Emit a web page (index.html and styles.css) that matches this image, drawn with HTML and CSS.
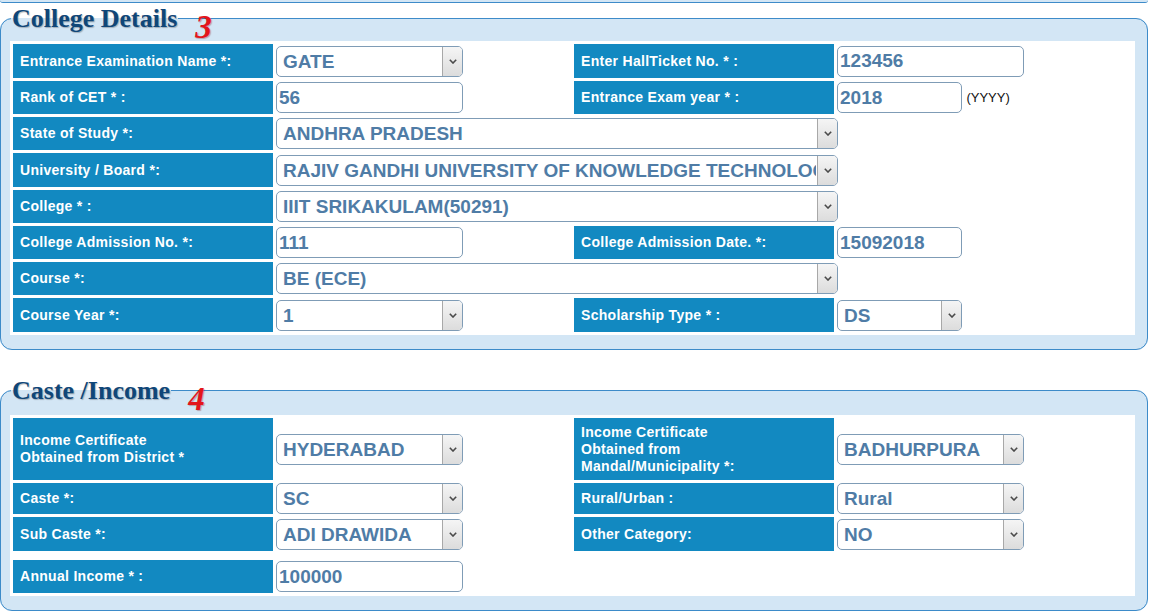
FILE: index.html
```html
<!DOCTYPE html>
<html lang="en">
<head>
    <meta charset="UTF-8">
    <title>Scholarship Application - College Details</title>
    <link rel="stylesheet" href="styles.css">
</head>
<body>
    <div class="prev-box"></div>

    <fieldset class="section">
        <legend>College Details<span class="step">3</span></legend>
        <table class="form-table">
            <colgroup>
                <col class="c-label"><col class="c-field"><col class="c-label"><col class="c-field">
            </colgroup>
            <tr class="r34">
                <td class="lbl">Entrance Examination Name *:</td>
                <td>
                    <span class="sel w-md"><select><option>GATE</option></select><i class="arr"><svg width="8" height="5" viewBox="0 0 8 5"><polyline points="0.8,0.8 4,4 7.2,0.8"/></svg></i></span>
                </td>
                <td class="lbl">Enter HallTicket No. * :</td>
                <td><input class="txt w-md" type="text" value="123456"></td>
            </tr>
            <tr>
                <td class="lbl">Rank of CET * :</td>
                <td><input class="txt w-md" type="text" value="56"></td>
                <td class="lbl">Entrance Exam year * :</td>
                <td><input class="txt w-sm" type="text" value="2018"> <span class="hint">(YYYY)</span></td>
            </tr>
            <tr>
                <td class="lbl">State of Study *:</td>
                <td colspan="3">
                    <span class="sel w-lg"><select><option>ANDHRA PRADESH</option></select><i class="arr"><svg width="8" height="5" viewBox="0 0 8 5"><polyline points="0.8,0.8 4,4 7.2,0.8"/></svg></i></span>
                </td>
            </tr>
            <tr class="r34">
                <td class="lbl">University / Board *:</td>
                <td colspan="3">
                    <span class="sel w-lg"><select><option>RAJIV GANDHI UNIVERSITY OF KNOWLEDGE TECHNOLOGIES</option></select><i class="arr"><svg width="8" height="5" viewBox="0 0 8 5"><polyline points="0.8,0.8 4,4 7.2,0.8"/></svg></i></span>
                </td>
            </tr>
            <tr>
                <td class="lbl">College * :</td>
                <td colspan="3">
                    <span class="sel w-lg"><select><option>IIIT SRIKAKULAM(50291)</option></select><i class="arr"><svg width="8" height="5" viewBox="0 0 8 5"><polyline points="0.8,0.8 4,4 7.2,0.8"/></svg></i></span>
                </td>
            </tr>
            <tr>
                <td class="lbl">College Admission No. *:</td>
                <td><input class="txt w-md" type="text" value="111"></td>
                <td class="lbl">College Admission Date. *:</td>
                <td><input class="txt w-sm" type="text" value="15092018"></td>
            </tr>
            <tr>
                <td class="lbl">Course *:</td>
                <td colspan="3">
                    <span class="sel w-lg"><select><option>BE (ECE)</option></select><i class="arr"><svg width="8" height="5" viewBox="0 0 8 5"><polyline points="0.8,0.8 4,4 7.2,0.8"/></svg></i></span>
                </td>
            </tr>
            <tr class="r34">
                <td class="lbl">Course Year *:</td>
                <td>
                    <span class="sel w-md"><select><option>1</option></select><i class="arr"><svg width="8" height="5" viewBox="0 0 8 5"><polyline points="0.8,0.8 4,4 7.2,0.8"/></svg></i></span>
                </td>
                <td class="lbl">Scholarship Type * :</td>
                <td>
                    <span class="sel w-sm"><select><option>DS</option></select><i class="arr"><svg width="8" height="5" viewBox="0 0 8 5"><polyline points="0.8,0.8 4,4 7.2,0.8"/></svg></i></span>
                </td>
            </tr>
        </table>
    </fieldset>

    <fieldset class="section second">
        <legend>Caste /Income<span class="step">4</span></legend>
        <table class="form-table">
            <colgroup>
                <col class="c-label"><col class="c-field"><col class="c-label"><col class="c-field">
            </colgroup>
            <tr class="r-tall">
                <td class="lbl">Income Certificate<br>Obtained from District *</td>
                <td>
                    <span class="sel w-md"><select><option>HYDERABAD</option></select><i class="arr"><svg width="8" height="5" viewBox="0 0 8 5"><polyline points="0.8,0.8 4,4 7.2,0.8"/></svg></i></span>
                </td>
                <td class="lbl">Income Certificate<br>Obtained from<br>Mandal/Municipality *:</td>
                <td>
                    <span class="sel w-md"><select><option>BADHURPURA</option></select><i class="arr"><svg width="8" height="5" viewBox="0 0 8 5"><polyline points="0.8,0.8 4,4 7.2,0.8"/></svg></i></span>
                </td>
            </tr>
            <tr class="r31">
                <td class="lbl">Caste *:</td>
                <td>
                    <span class="sel w-md"><select><option>SC</option></select><i class="arr"><svg width="8" height="5" viewBox="0 0 8 5"><polyline points="0.8,0.8 4,4 7.2,0.8"/></svg></i></span>
                </td>
                <td class="lbl">Rural/Urban :</td>
                <td>
                    <span class="sel w-md"><select><option>Rural</option></select><i class="arr"><svg width="8" height="5" viewBox="0 0 8 5"><polyline points="0.8,0.8 4,4 7.2,0.8"/></svg></i></span>
                </td>
            </tr>
            <tr class="r34">
                <td class="lbl">Sub Caste *:</td>
                <td>
                    <span class="sel w-md"><select><option>ADI DRAWIDA</option></select><i class="arr"><svg width="8" height="5" viewBox="0 0 8 5"><polyline points="0.8,0.8 4,4 7.2,0.8"/></svg></i></span>
                </td>
                <td class="lbl">Other Category:</td>
                <td>
                    <span class="sel w-md"><select><option>NO</option></select><i class="arr"><svg width="8" height="5" viewBox="0 0 8 5"><polyline points="0.8,0.8 4,4 7.2,0.8"/></svg></i></span>
                </td>
            </tr>
            <tr class="spacer"><td colspan="4"></td></tr>
            <tr>
                <td class="lbl">Annual Income * :</td>
                <td><input class="txt w-md" type="text" value="100000"></td>
                <td></td>
                <td></td>
            </tr>
        </table>
    </fieldset>
</body>
</html>
```

FILE: styles.css
```css
body {
    margin: 0;
    background: #fff;
    font-family: "Liberation Sans", Arial, sans-serif;
}
.prev-box {
    width: 1148px;
    height: 2px;
    box-sizing: content-box;
    background: #d3e6f5;
    border-bottom: 1px solid #3d8bc9;
    border-radius: 0 0 4px 4px;
}
.section {
    width: 1148px;
    box-sizing: border-box;
    margin: 0;
    padding: 8px 0 14px 9px;
    border: 1px solid #3d8bc9;
    border-radius: 12px;
    background: #d3e6f5;
}
.section.second {
    margin-top: 25px;
    padding-top: 10px;
}
.section legend {
    position: relative;
    top: 1px;
    padding: 0 1px;
    margin-left: 1px;
    font-family: "Liberation Serif", "Times New Roman", serif;
    font-weight: bold;
    font-size: 26px;
    line-height: 30px;
    color: #0f4678;
    text-shadow: 1px 1px 1px rgba(0, 0, 0, 0.25);
}
.step {
    position: absolute;
    left: calc(100% + 17px);
    top: 7px;
    font-family: "Liberation Serif", "Times New Roman", serif;
    font-style: italic;
    font-weight: bold;
    font-size: 33px;
    line-height: 33px;
    color: #e3151c;
    text-shadow: 1px 1px 1px rgba(120, 0, 0, 0.3);
}
.form-table {
    width: 1125px;
    table-layout: fixed;
    border-collapse: separate;
    border-spacing: 3px;
    background: #fff;
}
.c-label {
    width: 260px;
}
.c-field {
    width: 295px;
}
.form-table td {
    height: 33px;
    padding: 0;
    vertical-align: middle;
    white-space: nowrap;
}
.form-table tr.r34 td {
    height: 34px;
}
.form-table tr.r31 td {
    height: 31px;
}
.form-table tr.r-tall td {
    height: 62px;
}
.form-table tr.spacer td {
    height: 3px;
}
.form-table td.lbl {
    background: #1289c1;
    color: #fff;
    font-size: 14px;
    font-weight: bold;
    letter-spacing: 0.3px;
    line-height: 17px;
    padding: 0 7px;
}
.txt, .sel select {
    height: 31px;
    box-sizing: border-box;
    border: 1px solid #7f9cb6;
    border-radius: 5px;
    background: #fff;
    font-family: "Liberation Sans", Arial, sans-serif;
    font-size: 19px;
    font-weight: bold;
    color: #4f7ca6;
    vertical-align: middle;
    outline: none;
}
.txt {
    padding: 0 2px;
}
.sel {
    position: relative;
    display: inline-block;
    vertical-align: middle;
}
.sel select {
    width: 100%;
    -webkit-appearance: none;
    appearance: none;
    padding: 0 21px 0 6px;
    margin: 0;
    display: block;
}
.sel .arr {
    position: absolute;
    top: 1px;
    right: 1px;
    bottom: 1px;
    width: 19px;
    display: flex;
    align-items: center;
    justify-content: center;
    background: linear-gradient(#f5f5f5, #dcdcdc);
    border-left: 1px solid #a8a8a8;
    border-radius: 0 4px 4px 0;
    pointer-events: none;
}
.sel .arr svg polyline {
    fill: none;
    stroke: #4a4a4a;
    stroke-width: 1.6;
}
.w-md {
    width: 187px;
}
.w-sm {
    width: 125px;
}
.w-lg {
    width: 562px;
}
.hint {
    font-size: 13px;
    color: #111;
    vertical-align: middle;
}
```
